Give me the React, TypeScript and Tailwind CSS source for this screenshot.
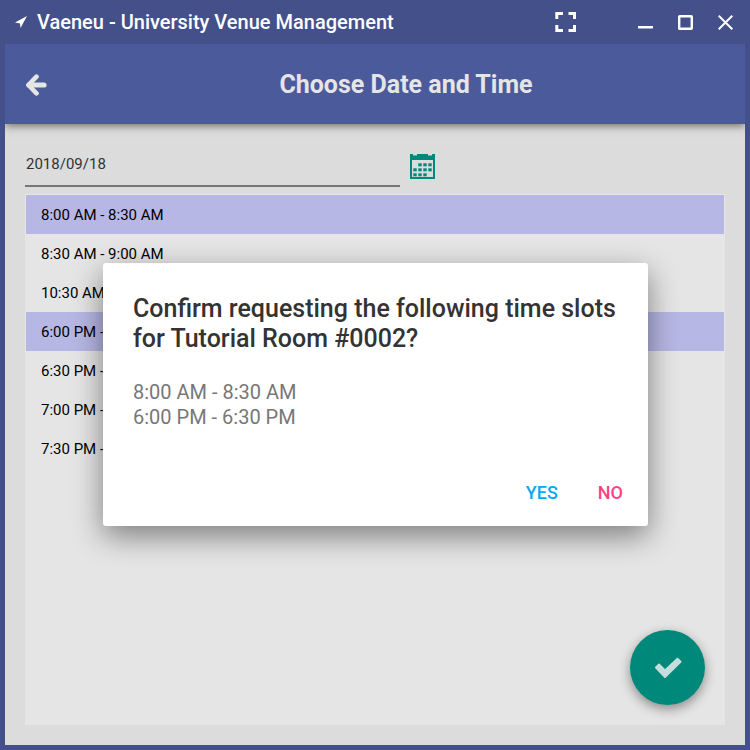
import { useState } from "react";

const slots = [
  "8:00 AM - 8:30 AM",
  "8:30 AM - 9:00 AM",
  "10:30 AM - 11:00 AM",
  "6:00 PM - 6:30 PM",
  "6:30 PM - 7:00 PM",
  "7:00 PM - 7:30 PM",
  "7:30 PM - 8:00 PM",
];

function TitleBar() {
  return (
    <div className="flex h-11 shrink-0 items-center pr-1 pl-[15px] text-white">
      <svg width="12" height="12" viewBox="0 0 12 12" fill="currentColor" aria-hidden="true">
        <path d="M12 0 5.500 12 5 7.500 0 6.500z" />
      </svg>
      <h1 className="ml-[10px] flex-1 text-[20px] leading-6 font-medium whitespace-nowrap">Vaeneu - University Venue Management</h1>
      <button aria-label="Full screen" className="mr-10 flex size-10 items-center justify-center">
        <svg width="22" height="20" viewBox="0 0 22 20" fill="none" stroke="currentColor" strokeWidth="3">
          <path d="M1.800 7V1.500H8M13.500 1.500h6V7M19.500 13v5.500h-6M8 18.500H1.800V13" />
        </svg>
      </button>
      <button aria-label="Minimize" className="flex size-10 items-center justify-center">
        <svg width="16" height="16" viewBox="0 0 16 16" fill="currentColor">
          <path d="M0 12h15v2.500H0z" />
        </svg>
      </button>
      <button aria-label="Maximize" className="flex size-10 items-center justify-center">
        <svg width="16" height="16" viewBox="0 0 16 16" fill="none" stroke="currentColor" strokeWidth="2.400">
          <rect x="1.200" y="2.200" width="12.600" height="12.600" rx="0.500" />
        </svg>
      </button>
      <button aria-label="Close" className="flex size-10 items-center justify-center">
        <svg width="16" height="16" viewBox="0 0 16 16" fill="none" stroke="currentColor" strokeWidth="2">
          <path d="m0.700 1.700 13.600 13.600M14.300 1.700 0.700 15.300" />
        </svg>
      </button>
    </div>
  );
}

function Header() {
  return (
    <header className="grid h-20 shrink-0 grid-cols-[62px_1fr] items-center bg-[#4b5a9b] text-[#e5e5e5] shadow-[0_2px_8px_rgba(0,0,0,0.5)]">
      <button aria-label="Back" className="flex size-[62px] items-center justify-center pt-px">
        <svg width="22" height="22" viewBox="0 0 22 22" fill="none" stroke="currentColor">
          <path d="M11.500 2.700 3.400 11l8.100 8.300" strokeWidth="4.600" strokeLinecap="round" strokeLinejoin="round" />
          <path d="M4 11h15" strokeWidth="5.200" strokeLinecap="round" />
        </svg>
      </button>
      <h2 className="pt-px text-center text-[25px] leading-[33px] font-bold">Choose Date and Time</h2>
    </header>
  );
}

function CalendarIcon() {
  const dots = [
    [8, 9], [13, 9], [18, 9],
    [3, 14], [8, 14], [13, 14], [18, 14],
    [3, 19], [8, 19], [13, 19],
  ];
  return (
    <svg width="25" height="25" viewBox="0 0 25 25" aria-hidden="true">
      <path d="M1 1h23v23H1z" fill="none" stroke="#00897b" strokeWidth="2" />
      <path d="M0 0h25v6H0z" fill="#00897b" />
      <path d="M3 0h4v1.500H3zM18 0h4v1.500h-4z" fill="#dcdcdc" />
      {dots.map(([x, y]) => (
        <rect key={`${x}-${y}`} x={x + 0.3} y={y + 0.3} width="3.400" height="3" fill="#00897b" />
      ))}
    </svg>
  );
}

function ConfirmDialog({ onClose }: { onClose: () => void }) {
  return (
    <div className="absolute inset-0 z-20 flex items-center justify-center pl-px">
      <div
        role="dialog"
        aria-labelledby="confirm-title"
        className="w-full max-w-[545px] rounded-[3px] bg-white pt-[31px] pb-3 shadow-[0_10px_30px_rgba(0,0,0,0.45)]"
      >
        <h3 id="confirm-title" className="pr-5 pl-[30px] text-[25px] leading-[30px] font-medium text-[#333333]">
          Confirm requesting the following time slots for Tutorial Room #0002?
        </h3>
        <p className="mt-[26px] px-[30px] text-[20px] leading-[25px] text-[#777777]">
          8:00 AM - 8:30 AM
          <br />
          6:00 PM - 6:30 PM
        </p>
        <div className="mt-[42px] flex justify-end gap-2 pr-[9px] text-[18px] leading-6 font-medium">
          <button onClick={onClose} className="h-[42px] px-4 text-[#03a9f4]">YES</button>
          <button onClick={onClose} className="h-[42px] px-4 text-[#ff4081]">NO</button>
        </div>
      </div>
    </div>
  );
}

export default function App() {
  const [selected, setSelected] = useState([0, 3]);
  const [open, setOpen] = useState(true);
  const toggle = (i: number) =>
    setSelected((s) => (s.includes(i) ? s.filter((n) => n !== i) : [...s, i]));

  return (
    <div className="flex min-h-screen flex-col bg-[#43508a] font-[Roboto,sans-serif]">
      <TitleBar />
      <div className="relative mx-[5px] mb-[5px] flex flex-1 flex-col bg-[#dcdcdc]">
        <div className="flex flex-1 flex-col overflow-hidden">
          <Header />
          <main className="flex flex-1 flex-col p-5">
            <div className="flex h-[42px] items-start">
              <input
                aria-label="Date"
                defaultValue="2018/09/18"
                className="h-[43px] w-[375px] border-b-2 border-[#777777] bg-transparent px-px pb-px text-[15px] leading-5 text-[#333333] outline-none"
              />
              <button aria-label="Pick a date" className="mt-[10px] ml-[10px]">
                <CalendarIcon />
              </button>
            </div>
            <ul className="mt-2 flex-1 bg-[#e5e5e5] px-px pt-px">
              {slots.map((slot, i) => (
                <li key={slot}>
                  <button
                    aria-pressed={selected.includes(i)}
                    onClick={() => toggle(i)}
                    className={`h-[39px] w-full px-[15px] text-left text-[15px] leading-5 text-black ${selected.includes(i) ? "bg-[#b7b7e5]" : ""}`}
                  >
                    {slot}
                  </button>
                </li>
              ))}
            </ul>
          </main>
        </div>
        <button
          aria-label="Confirm"
          onClick={() => setOpen(true)}
          className="absolute right-10 bottom-10 flex size-[75px] items-center justify-center rounded-full bg-[#00897b] shadow-[0_4px_12px_rgba(0,0,0,0.4)]"
        >
          <svg width="28" height="22" viewBox="0 0 28 22" fill="#c5dedb" stroke="#c5dedb" strokeWidth="2" strokeLinejoin="round">
            <path d="M2 10.500 5 7.500 11 13.500 23.500 1.800 26.500 4.800 11 20z" />
          </svg>
        </button>
        {open && <ConfirmDialog onClose={() => setOpen(false)} />}
      </div>
    </div>
  );
}
